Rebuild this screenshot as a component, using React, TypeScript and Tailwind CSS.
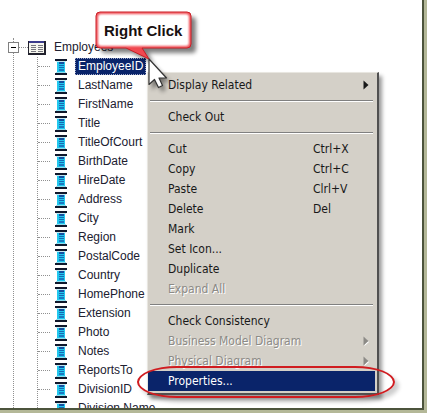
import { Fragment } from "react";
import { clsx } from "clsx";

const columns = [
  "EmployeeID",
  "LastName",
  "FirstName",
  "Title",
  "TitleOfCourt",
  "BirthDate",
  "HireDate",
  "Address",
  "City",
  "Region",
  "PostalCode",
  "Country",
  "HomePhone",
  "Extension",
  "Photo",
  "Notes",
  "ReportsTo",
  "DivisionID",
  "Division Name",
];

type Item = {
  label: string;
  shortcut?: string;
  submenu?: boolean;
  disabled?: boolean;
  active?: boolean;
};

const menuGroups: Item[][] = [
  [{ label: "Display Related", submenu: true }],
  [{ label: "Check Out" }],
  [
    { label: "Cut", shortcut: "Ctrl+X" },
    { label: "Copy", shortcut: "Ctrl+C" },
    { label: "Paste", shortcut: "Clrl+V" },
    { label: "Delete", shortcut: "Del" },
    { label: "Mark" },
    { label: "Set Icon..." },
    { label: "Duplicate" },
    { label: "Expand All", disabled: true },
  ],
  [
    { label: "Check Consistency" },
    { label: "Business Model Diagram", submenu: true, disabled: true },
    { label: "Physical Diagram", submenu: true, disabled: true },
    { label: "Properties...", active: true },
  ],
];

function ColumnIcon() {
  return (
    <svg className="h-[18px] w-3 shrink-0" viewBox="0 0 12 18" shapeRendering="crispEdges" aria-hidden="true">
      <rect x="0" y="1" width="12" height="2" fill="#10182c" />
      <rect x="0" y="15" width="12" height="2" fill="#10182c" />
      <rect x="1" y="3" width="10" height="1" fill="#c4e8f4" />
      <rect x="2" y="4" width="8" height="10" fill="#22c8ee" />
      <rect x="1" y="14" width="10" height="1" fill="#8fdff2" />
      <rect x="4" y="4" width="5" height="2" fill="#1450a0" />
      <rect x="4" y="7" width="5" height="1" fill="#1668b4" />
      <rect x="4" y="9" width="5" height="1" fill="#1668b4" />
      <rect x="4" y="11" width="5" height="2" fill="#1a78c0" />
    </svg>
  );
}

function TableIcon() {
  return (
    <svg className="h-4 w-[18px] shrink-0" viewBox="0 0 18 16" shapeRendering="crispEdges" aria-hidden="true">
      <rect x="0" y="1" width="18" height="14" fill="#22222e" />
      <rect x="1" y="1" width="15" height="2" fill="#3c3c8c" />
      <rect x="1" y="3" width="15" height="10" fill="#f6f6ee" />
      <g fill="#77777f">
        <rect x="3" y="5" width="5" height="1" />
        <rect x="10" y="5" width="5" height="1" />
        <rect x="3" y="7" width="5" height="1" />
        <rect x="10" y="7" width="5" height="1" />
        <rect x="3" y="9" width="5" height="1" />
        <rect x="10" y="9" width="5" height="1" />
        <rect x="3" y="11" width="5" height="1" />
        <rect x="10" y="11" width="5" height="1" />
      </g>
    </svg>
  );
}

function Tree() {
  return (
    <div className="pt-[38px] pl-[13px] font-['Liberation_Sans',Arial,sans-serif] text-[12px] leading-[19px] text-[#202030]">
      <div className="border-l border-dotted border-[#909090]">
        <div className="-ml-1.5 flex h-[19px] items-center">
          <button
            aria-label="Collapse Employees"
            className="flex size-[11px] items-center justify-center border border-[#808080] bg-white"
          >
            <span className="h-px w-[5px] bg-black" />
          </button>
          <span className="w-[9px] border-t border-dotted border-[#909090]" />
          <TableIcon />
          <span className="ml-2">Employees</span>
        </div>
        <ul className="ml-[23px] border-l border-dotted border-[#909090]">
          {columns.map((name, i) => (
            <li key={name} className="flex h-[19px] items-center whitespace-nowrap">
              <span className="mr-[5px] w-3 border-t border-dotted border-[#909090]" />
              <ColumnIcon />
              <span
                className={clsx(
                  "ml-2 h-[17px] px-[3px] leading-[17px]",
                  i === 0 && "bg-[#0a246a] text-white outline-1 -outline-offset-1 outline-dotted outline-[#a0a8c8]"
                )}
              >
                {name}
              </span>
            </li>
          ))}
        </ul>
      </div>
    </div>
  );
}

function MenuItem({ item }: { item: Item }) {
  return (
    <button
      role="menuitem"
      disabled={item.disabled}
      className={clsx(
        "flex h-5 w-full items-center pr-1.5 pl-5 text-left",
        item.active && "bg-[#0a246a] text-white",
        item.disabled && "text-[#8c8a86] [text-shadow:1px_1px_0_#fff]"
      )}
    >
      <span className="flex-1">{item.label}</span>
      {item.shortcut && <span className="w-14">{item.shortcut}</span>}
      {item.submenu && (
        <svg className="h-2.5 w-[6px]" viewBox="0 0 6 10" aria-hidden="true">
          {item.disabled && <path d="M1.5 1.5 6 6 1.5 10z" fill="#fff" />}
          <path d="M0.5 0.5 5.5 5 0.5 9.5z" fill="currentColor" />
        </svg>
      )}
    </button>
  );
}

function ContextMenu() {
  return (
    <div
      role="menu"
      className="absolute top-[72px] left-[147px] w-[232px] border-t border-r-2 border-b-2 border-l border-t-[#e8e6e0] border-r-[#505050] border-b-[#505050] border-l-[#e8e6e0] bg-[#d4d0c8] p-0.5 pl-0 font-['DejaVu_Sans_Condensed','DejaVu_Sans',sans-serif] text-[12px] text-[#181818] shadow-[3px_4px_4px_rgba(0,0,0,0.4)]"
    >
      {menuGroups.map((group, i) => (
        <Fragment key={group[0].label}>
          {i > 0 && <hr className="mx-0.5 my-[5px] h-0.5 border-t border-b border-t-[#808080] border-b-white" />}
          {group.map((item) => (
            <MenuItem key={item.label} item={item} />
          ))}
        </Fragment>
      ))}
    </div>
  );
}

function Callout() {
  return (
    <div className="absolute top-2 left-[92px] h-[60px] w-[112px]">
      <svg className="absolute inset-0 size-full overflow-visible" viewBox="0 0 112 60" aria-hidden="true">
        <defs>
          <filter id="soft" x="-20%" y="-20%" width="150%" height="150%">
            <feGaussianBlur stdDeviation="2" />
          </filter>
          <filter id="glow">
            <feGaussianBlur stdDeviation="1" />
          </filter>
        </defs>
        <path
          d="M8 4H95Q99 4 99 8V36Q99 40 95 40H51L57 51 35 40H8Q4 40 4 36V8Q4 4 8 4Z"
          fill="#000"
          opacity="0.5"
          transform="translate(5 5)"
          filter="url(#soft)"
        />
        <path
          d="M8 4H95Q99 4 99 8V36Q99 40 95 40H50L57 51 34 40H8Q4 40 4 36V8Q4 4 8 4Z"
          fill="#f04850"
          stroke="#c81c24"
          strokeWidth="1"
        />
        <rect x="6" y="6" width="91" height="32" rx="3" fill="#fff" filter="url(#glow)" />
        <rect x="8" y="8" width="87" height="28" rx="2" fill="#fff" />
      </svg>
      <span className="relative block pt-[13px] pl-3 font-['Liberation_Sans',Arial,sans-serif] text-[15px] leading-[19px] font-bold whitespace-nowrap text-[#181010]">
        Right Click
      </span>
    </div>
  );
}

function Cursor() {
  return (
    <svg className="absolute top-[58px] left-[148px] h-8 w-6 overflow-visible" viewBox="0 0 24 32" aria-hidden="true">
      <path d="M4 5V32L10 26 14 34 18 31 14 24H22Z" fill="#000" opacity="0.45" filter="url(#soft)" />
      <path
        d="M1 1V26.5L6.5 21.5 10.5 29.5 14.5 27.5 11 20H18.5Z"
        fill="#fff"
        stroke="#333"
        strokeWidth="1.2"
        strokeLinejoin="round"
      />
    </svg>
  );
}

export default function App() {
  return (
    <div className="h-screen overflow-hidden bg-[#b4b898] pr-[3px] pb-[3px]">
      <main className="relative h-full overflow-hidden border-r-2 border-b-2 border-r-[#4c543c] border-b-[#4c543c] bg-white">
        <Tree />
        <ContextMenu />
        <div className="absolute top-[366px] left-[137px] h-8 w-[258px] rounded-[40px/16px] border-2 border-[#d01c20] shadow-[4px_4px_4px_rgba(0,0,0,0.2)]" />
        <Callout />
        <Cursor />
      </main>
    </div>
  );
}
